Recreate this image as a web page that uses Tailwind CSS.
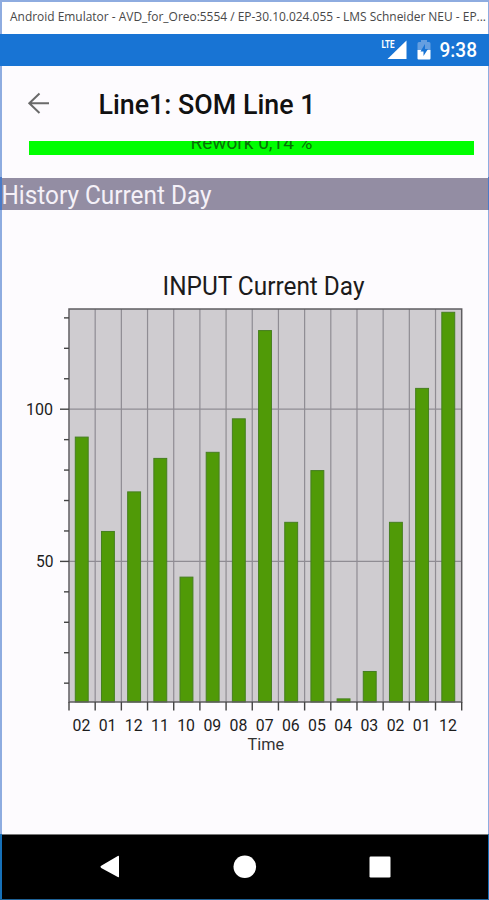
<!DOCTYPE html>
<html lang="en">
<head>
<meta charset="utf-8">
<title>Line1: SOM Line 1</title>
<script src="https://cdn.jsdelivr.net/npm/@tailwindcss/browser@4"></script>
</head>
<body class="w-[489px] h-[900px] overflow-hidden bg-[#fdfbfe] font-[Roboto,sans-serif]">
<div class="relative flex h-[900px] w-[489px] flex-col">
  <header class="h-[34px] shrink-0 border-t-2 border-[#8eace0] bg-white">
    <svg class="block h-8 w-full" viewBox="0 2 489 32" font-family="'Open Sans','Noto Sans',sans-serif" font-size="12" fill="#484848">
      <text x="10" y="21.300" textLength="476" lengthAdjust="spacingAndGlyphs">Android Emulator - AVD_for_Oreo:5554 / EP-30.10.024.055 - LMS Schneider NEU - EP...</text>
    </svg>
  </header>
  <div class="h-8 shrink-0 bg-[#1874d4]">
    <svg class="block h-8 w-full" viewBox="0 34 489 32" fill="#fff" font-family="Roboto,sans-serif">
      <text x="381.5" y="48" font-size="10.500" font-weight="700" textLength="13" lengthAdjust="spacingAndGlyphs">LTE</text>
      <path d="M406.5 40.5V59H387.5Z"/>
      <path d="M417.5 50V43.500Q417.500 42 419 42H421V40H427V42H429Q430.500 42 430.500 43.500V50Z" fill="#659fe0"/>
      <path d="M417.500 50H430.500V58.500Q430.500 59.500 429.500 59.500H418.500Q417.500 59.500 417.500 58.500Z"/>
      <path d="M425 44L420.500 51.500H423.500V56L428 49H425Z" fill="#1874d4"/>
      <text x="439.5" y="56.600" font-size="19.500" font-weight="500" textLength="37.500" lengthAdjust="spacingAndGlyphs">9:38</text>
    </svg>
  </div>
  <div class="flex h-[75px] shrink-0 items-center">
    <svg class="block h-[75px] w-full" viewBox="0 66 489 75" font-family="Roboto,sans-serif">
      <path d="M49 103.300H29.500M39.500 93.500L29.300 103.300L39.500 113" fill="none" stroke="#6a6a6a" stroke-width="2"/>
      <text x="98.500" y="113.600" font-size="27" font-weight="500" fill="#111" textLength="217" lengthAdjust="spacingAndGlyphs">Line1: SOM Line 1</text>
    </svg>
  </div>
  <div class="ml-[29px] h-[14px] w-[445px] shrink-0 overflow-hidden bg-[#00ff00]">
    <svg class="block h-[14px] w-full" viewBox="29 141 445 14" font-family="Roboto,sans-serif" font-size="19">
      <text x="190.500" y="148.600" fill="#087008" textLength="122" lengthAdjust="spacingAndGlyphs">Rework 0,14 %</text>
    </svg>
  </div>
  <div class="mt-[22.500px] h-[32.500px] shrink-0 bg-[#938da3]">
    <svg class="block h-[32.500px] w-full" viewBox="0 177.500 489 32.500" font-family="Roboto,sans-serif" font-size="25" fill="#f5f1f8">
      <text x="1.500" y="203" textLength="210" lengthAdjust="spacingAndGlyphs">History Current Day</text>
    </svg>
  </div>
  <main class="min-h-0 flex-1">
    <svg id="chart" class="block h-[624px] w-full" viewBox="0 210 489 624" font-family="Roboto,sans-serif" fill="#1c1c1c">
      <text x="162.500" y="295.300" font-size="25" textLength="202" lengthAdjust="spacingAndGlyphs">INPUT Current Day</text>
      <rect x="69.300" y="309" width="392.500" height="393" fill="#cfccd0"/>
      <g id="grid" stroke="#8f8c93" stroke-width="1.200"></g>
      <g id="bars" fill="#509a07" stroke="#467f20" stroke-width="1"></g>
      <rect x="69" y="309" width="392.700" height="393" fill="none" stroke="#5f5d61" stroke-width="1.500"/>
      <g id="ticks" stroke="#444" stroke-width="1.400"></g>
      <g id="labels" font-size="16.500"></g>
      <g font-size="16.500">
        <text x="26" y="414.700" textLength="27" lengthAdjust="spacingAndGlyphs">100</text>
        <text x="36" y="567" textLength="17.500" lengthAdjust="spacingAndGlyphs">50</text>
        <text x="247.500" y="750.200" font-size="16" fill="#333" textLength="36.500" lengthAdjust="spacingAndGlyphs">Time</text>
      </g>
    </svg>
  </main>
  <nav class="h-[66px] shrink-0 border-t border-[#777] bg-black">
    <svg class="block h-16 w-full" viewBox="0 835 489 64" fill="#fff">
      <path d="M101.200 865.800L117.800 856Q119 855.500 119 856.800V876.500Q119 877.800 117.800 877L101.200 868Q99.500 866.900 101.200 865.800Z"/>
      <circle cx="244.800" cy="866.700" r="11.300"/>
      <rect x="369.500" y="856.500" width="21" height="21" rx="1.200"/>
    </svg>
  </nav>
  <div class="pointer-events-none absolute inset-y-0 left-0 flex w-[2px] flex-col">
    <i class="h-[34px] bg-[#8eace0]"></i><i class="h-8 bg-[#1874d4]"></i><i class="h-[111px] bg-[#8eace0]"></i><i class="h-[33px] bg-[#4b7ac6]"></i><i class="flex-1 bg-[#8eace0]"></i><i class="h-[66px] bg-[#1670b8]"></i>
  </div>
  <div class="pointer-events-none absolute inset-y-0 right-0 flex w-[1.500px] flex-col">
    <i class="h-[34px] bg-[#8eace0]"></i><i class="h-8 bg-[#1874d4]"></i><i class="h-[111px] bg-[#8eace0]"></i><i class="h-[33px] bg-[#4b7ac6]"></i><i class="flex-1 bg-[#8eace0]"></i><i class="h-[66px] bg-[#1670b8]"></i>
  </div>
  <div class="absolute inset-x-0 bottom-0 h-[1.500px] bg-[#1f6296]"></div>
</div>
<script>
  const hours = ['02','01','12','11','10','09','08','07','06','05','04','03','02','01','12'];
  const values = [91,60,73,84,45,86,97,126,63,80,5,14,63,107,132];
  const step = 26.18, left = 69, bottom = 702;
  const y = v => 409.2 + (100 - v) * 3.044;
  const line = (x1, y1, x2, y2) => `<line x1="${x1}" y1="${y1}" x2="${x2}" y2="${y2}"/>`;
  let grid = line(left, y(100), 462, y(100)) + line(left, y(50), 462, y(50));
  let bars = '', ticks = '', labels = '';
  for (let i = 0; i <= 15; i++) {
    const x = left + i * step;
    if (i > 0 && i < 15) grid += line(x, 309, x, bottom);
    ticks += line(x, bottom, x, 710.5);
    if (i < 15) {
      const top = y(values[i]);
      bars += `<rect x="${75.3 + i * step}" y="${top + 0.5}" width="12.9" height="${bottom - top - 0.5}"/>`;
      labels += `<text x="${72.5 + i * step}" y="731.3" textLength="17.8" lengthAdjust="spacingAndGlyphs">${hours[i]}</text>`;
    }
  }
  for (let v = 10; v <= 130; v += 10) ticks += line(v % 50 ? 64 : 60, y(v), left, y(v));
  document.getElementById('grid').innerHTML = grid;
  document.getElementById('bars').innerHTML = bars;
  document.getElementById('ticks').innerHTML = ticks;
  document.getElementById('labels').innerHTML = labels;
</script>
</body>
</html>
